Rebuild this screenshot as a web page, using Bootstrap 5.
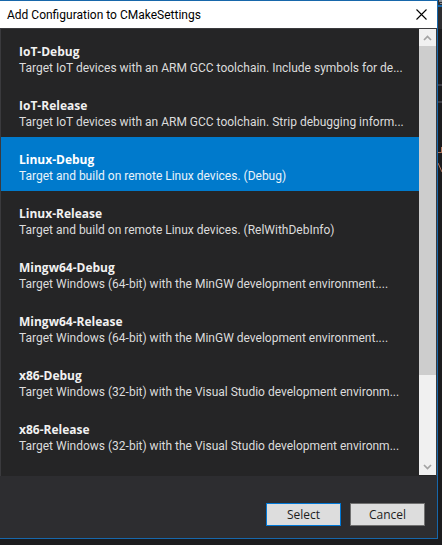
<!DOCTYPE html>
<html lang="en">
<head>
<meta charset="utf-8">
<meta name="viewport" content="width=device-width, initial-scale=1">
<title>Add Configuration to CMakeSettings</title>
<link href="https://cdn.jsdelivr.net/npm/bootstrap@5.3.0/dist/css/bootstrap.min.css" rel="stylesheet">
<style>
body { background: #1c1c1e; font-family: "Open Sans", "Noto Sans", sans-serif; font-size: 12px; line-height: 16px; }
.dialog { background: #2d2d30; border: solid #1767ab; border-width: 1px 1px 1px 0; margin-bottom: 6px; }
.titlebar { background: #fff; color: #000; height: 27px; padding: 0 10px 0 7px; }
.titlebar h1 { font-family: Roboto, "Open Sans", sans-serif; font-size: 12px; line-height: 16px; }
.close-btn { line-height: 0; }
.pane { background: #252526; border: solid #3a3a3d; border-width: 1px 1px 0 1px; }
.configs { padding-bottom: 15px; }
.config { height: 54px; padding: 15px 0 7px 18px; color: #dcdcdc; text-align: left; white-space: nowrap; overflow: hidden; }
.config strong { color: #f1f1f1; font-weight: 700; }
.config span { font-family: Roboto, "Open Sans", sans-serif; }
.config.chosen { background: #007acc; color: #e9f3fa; }
.config.chosen strong { color: #fff; }
.scroller { width: 17px; background: #f0f0f0; margin-bottom: 1px; }
.scroller button { height: 17px; line-height: 0; }
.thumb { background: #cdcdcd; flex: 330 0 0; }
.rest { flex: 83 0 0; }
.actions { padding: 27px 12px 12px; gap: 9px; }
.action { width: 75px; height: 23px; padding: 0; background: #dddddd; border: 1px solid #707070; color: #1e1e1e; line-height: 20px; }
.action.primary { border-color: #0078d7; }
.behind { width: 4px; }
</style>
<script src="https://cdn.jsdelivr.net/npm/bootstrap@5.3.0/dist/js/bootstrap.bundle.min.js"></script>
</head>
<body class="d-flex overflow-hidden">
<main class="dialog flex-grow-1 d-flex flex-column overflow-hidden" role="dialog" aria-labelledby="dlg-title">
  <header class="titlebar d-flex align-items-center justify-content-between">
    <h1 id="dlg-title" class="m-0 fw-normal">Add Configuration to CMakeSettings</h1>
    <button type="button" class="close-btn border-0 bg-transparent p-0" aria-label="Close">
      <svg width="11" height="11" viewBox="0 0 11 11" stroke="#000" stroke-width="1.1"><path d="M.5.5l10 10M10.5.5l-10 10"/></svg>
    </button>
  </header>
  <section class="pane d-flex">
    <div class="configs flex-grow-1 d-flex flex-column overflow-hidden">
      <button type="button" class="config border-0 bg-transparent"><strong class="d-block">IoT-Debug</strong><span class="d-block">Target IoT devices with an ARM GCC toolchain. Include symbols for de...</span></button>
      <button type="button" class="config border-0 bg-transparent"><strong class="d-block">IoT-Release</strong><span class="d-block">Target IoT devices with an ARM GCC toolchain. Strip debugging inform...</span></button>
      <button type="button" class="config chosen border-0" aria-pressed="true"><strong class="d-block">Linux-Debug</strong><span class="d-block">Target and build on remote Linux devices. (Debug)</span></button>
      <button type="button" class="config border-0 bg-transparent"><strong class="d-block">Linux-Release</strong><span class="d-block">Target and build on remote Linux devices. (RelWithDebInfo)</span></button>
      <button type="button" class="config border-0 bg-transparent"><strong class="d-block">Mingw64-Debug</strong><span class="d-block">Target Windows (64-bit) with the MinGW development environment....</span></button>
      <button type="button" class="config border-0 bg-transparent"><strong class="d-block">Mingw64-Release</strong><span class="d-block">Target Windows (64-bit) with the MinGW development environment....</span></button>
      <button type="button" class="config border-0 bg-transparent"><strong class="d-block">x86-Debug</strong><span class="d-block">Target Windows (32-bit) with the Visual Studio development environm...</span></button>
      <button type="button" class="config border-0 bg-transparent"><strong class="d-block">x86-Release</strong><span class="d-block">Target Windows (32-bit) with the Visual Studio development environm...</span></button>
    </div>
    <div class="scroller d-flex flex-column flex-shrink-0">
      <button type="button" class="border-0 bg-transparent p-0" aria-label="Scroll up"><svg width="17" height="17" fill="none" stroke="#a3a3a3" stroke-width="1.7"><path d="M5 11l3.500-3.500L12 11"/></svg></button>
      <div class="thumb"></div>
      <div class="rest"></div>
      <button type="button" class="border-0 bg-transparent p-0" aria-label="Scroll down"><svg width="17" height="17" fill="none" stroke="#a3a3a3" stroke-width="1.7"><path d="M5 7l3.500 3.500L12 7"/></svg></button>
    </div>
  </section>
  <footer class="actions d-flex justify-content-end">
    <button type="button" class="action primary">Select</button>
    <button type="button" class="action">Cancel</button>
  </footer>
</main>
<svg class="behind flex-shrink-0" width="4" height="545" viewBox="0 0 4 545" aria-hidden="true">
  <path fill="#2d2d30" d="M0 0h4v29H0z"/>
  <path fill="#8a8f96" d="M1 0h3v2H1zM2 3h2v1H2z"/>
  <path fill="#1767ab" d="M0 5h4v2H0z"/>
  <path fill="#3f3f46" d="M0 84h4v2H0zM0 101h4v2H0z"/>
  <path fill="none" stroke="#b0765f" d="M0 152.500h4M3.500 147v5M0 163l4 9"/>
</svg>
</body>
</html>
